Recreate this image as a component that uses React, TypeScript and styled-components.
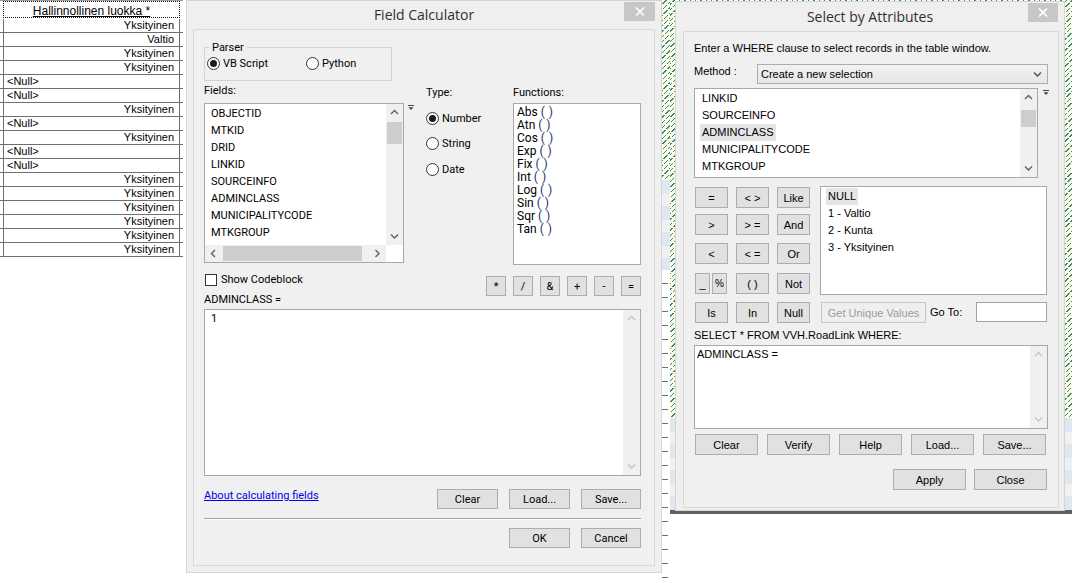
import React from "react";
import styled, { createGlobalStyle, css } from "styled-components";

const FC_FONT = `Roboto, "Liberation Sans", Arial, sans-serif`;
const SA_FONT = `"Liberation Sans", Arial, sans-serif`;
const TITLE_FONT = `"Open Sans", "Noto Sans", "Liberation Sans", sans-serif`;

const GlobalStyle = createGlobalStyle`
  *, *::before, *::after { box-sizing: border-box; }
  html, body { margin: 0; padding: 0; background: #ffffff; }
  body { width: 1081px; height: 583px; overflow: hidden; font-family: ${SA_FONT}; font-size: 11px; color: #000; }
`;

const Desktop = styled.div`
  position: relative;
  width: 1081px;
  height: 583px;
  overflow: hidden;
  background: #fff;
`;

const Backdrop = styled.div`
  display: grid;
  grid-template-columns: 186px 476px 8px 402px 1fr;
  height: 583px;
`;

const Blank = styled.div`
  background: #fff;
`;

/* ---------- attribute table behind ---------- */
const TablePane = styled.div`
  display: flex;
  flex-direction: column;
  background: #fff;
`;
const TableTopRule = styled.div`
  width: 183px;
  height: 1px;
  background: #9a9a9a;
`;
const HeaderRow = styled.div`
  width: 183px;
  height: 18px;
  padding-left: 3px;
`;
const HeaderCell = styled.div`
  width: 177px;
  height: 17px;
  border: 1px dotted #111;
  padding-top: 3px;
  font-family: ${SA_FONT};
  font-size: 12px;
  line-height: 13px;
  text-align: center;
  text-decoration: underline;
  white-space: nowrap;
`;
const DataRow = styled.div`
  width: 183px;
  height: 14px;
  padding-left: 3px;
  border-bottom: 1px solid #6f6f6f;
`;
const DataCell = styled.div<{ $null?: boolean }>`
  width: 177px;
  height: 13px;
  border-left: 1px solid #6f6f6f;
  border-right: 1px solid #6f6f6f;
  padding: 0 5px 0 3px;
  font-size: 11px;
  line-height: 13px;
  text-align: ${(p) => (p.$null ? "left" : "right")};
  white-space: nowrap;
`;

/* ---------- map window behind ---------- */
const hatch = css`
  background-color: #fffde0;
  background-image: repeating-linear-gradient(0deg, #fffde0 0 1px, transparent 1px 5px),
    repeating-linear-gradient(135deg, transparent 0 2.8px, #2f8894 2.8px 3.8px);
`;
const Sliver = styled.div`
  display: flex;
  flex-direction: column;
`;
const HatchBlock = styled.div<{ $h: number }>`
  height: ${(p) => p.$h}px;
  flex: none;
  ${hatch}
`;
const BandBlock = styled.div<{ $h: number }>`
  height: ${(p) => p.$h}px;
  flex: none;
  background: repeating-linear-gradient(180deg, #dfe8f1 0 14px, #f1f1f1 14px 26px);
`;
const TickBlock = styled.div`
  flex: 1;
  background-image: repeating-linear-gradient(180deg, transparent 0 13px, #6f6f6f 13px 14px);
  background-size: 6px 100%;
  background-repeat: no-repeat;
`;
const MapWindow = styled.div`
  display: flex;
  flex-direction: column;
`;
const MapEdge = styled.div`
  height: 4px;
  flex: none;
  background: #606060;
`;

/* ---------- dialog windows ---------- */
const Window = styled.div<{ $x: number; $y: number; $w: number; $h: number }>`
  position: absolute;
  left: ${(p) => p.$x}px;
  top: ${(p) => p.$y}px;
  width: ${(p) => p.$w}px;
  height: ${(p) => p.$h}px;
  display: flex;
  flex-direction: column;
  background: #efefef;
  border: 1px solid #d4d4d4;
`;
const TitleBar = styled.div<{ $h: number }>`
  height: ${(p) => p.$h}px;
  flex: none;
  display: grid;
  grid-template-columns: 1fr auto 1fr;
  align-items: start;
`;
const TitleText = styled.div`
  grid-column: 2;
  align-self: center;
  font-family: ${TITLE_FONT};
  font-size: 14px;
  line-height: 20px;
  color: #2f2f2f;
  white-space: nowrap;
`;
const CloseBox = styled.div<{ $w: number; $mt: number; $mr: number }>`
  grid-column: 3;
  justify-self: end;
  width: ${(p) => p.$w}px;
  height: 19px;
  margin-top: ${(p) => p.$mt}px;
  margin-right: ${(p) => p.$mr}px;
  background: #c7c7c7;
  display: flex;
  align-items: center;
  justify-content: center;
`;
const Panel = styled.div<{ $m: string; $p: string; $font: string }>`
  flex: 1;
  margin: ${(p) => p.$m};
  padding: ${(p) => p.$p};
  border: 1px solid #d9d9d9;
  background: #f0f0f0;
  font-family: ${(p) => p.$font};
  font-size: 11px;
  display: flex;
  flex-direction: column;
  min-height: 0;
`;

const Button = styled.div<{ $w: number; $h?: number; $disabled?: boolean; $fs?: number }>`
  width: ${(p) => p.$w}px;
  height: ${(p) => p.$h ?? 20}px;
  flex: none;
  display: flex;
  align-items: center;
  justify-content: center;
  background: ${(p) => (p.$disabled ? "#efefef" : "#e1e1e1")};
  border: 1px solid ${(p) => (p.$disabled ? "#c6c6c6" : "#adadad")};
  color: ${(p) => (p.$disabled ? "#9c9c9c" : "#000")};
  font-size: ${(p) => p.$fs ?? 11}px;
  white-space: nowrap;
`;

const Label = styled.div<{ $pt?: number }>`
  line-height: 13px;
  padding-top: ${(p) => p.$pt ?? 0}px;
  white-space: nowrap;
`;

/* radios / checks */
const RadioOption = styled.div<{ $w?: number }>`
  display: flex;
  align-items: center;
  gap: 3px;
  height: 14px;
  width: ${(p) => (p.$w ? `${p.$w}px` : "auto")};
  white-space: nowrap;
`;
const RadioCircle = styled.span`
  width: 13px;
  height: 13px;
  flex: none;
  border: 1px solid #333;
  border-radius: 50%;
  background: #fff;
  display: flex;
  align-items: center;
  justify-content: center;
`;
const RadioDot = styled.span`
  width: 7px;
  height: 7px;
  border-radius: 50%;
  background: #1c1c1c;
`;
const Radio = ({ on }: { on?: boolean }) => <RadioCircle>{on && <RadioDot />}</RadioCircle>;

const CheckBox = styled.span`
  width: 12px;
  height: 12px;
  flex: none;
  border: 1px solid #333;
  background: #fff;
`;

/* lists & scrollbars */
const ListBox = styled.div<{ $w: number; $h: number; $col?: boolean }>`
  width: ${(p) => p.$w}px;
  height: ${(p) => p.$h}px;
  flex: none;
  background: #fff;
  border: 1px solid #a8a8a8;
  display: flex;
  flex-direction: ${(p) => (p.$col ? "column" : "row")};
  overflow: hidden;
`;
const ListMain = styled.div`
  flex: 1;
  display: flex;
  min-height: 0;
`;
const ListItems = styled.div<{ $pt: number; $pl: number; $lh: number; $fs?: number }>`
  flex: 1;
  padding-top: ${(p) => p.$pt}px;
  padding-left: ${(p) => p.$pl}px;
  line-height: ${(p) => p.$lh}px;
  font-size: ${(p) => p.$fs ?? 11}px;
  display: flex;
  flex-direction: column;
  align-items: flex-start;
  overflow: hidden;
`;
const ListItem = styled.div<{ $sel?: boolean }>`
  padding: 0 2px;
  margin-left: -2px;
  background: ${(p) => (p.$sel ? "#e5e5e5" : "transparent")};
  white-space: nowrap;
`;
const Paren = styled.span`
  color: #1b2f66;
  letter-spacing: 0.5px;
`;
const VScroll = styled.div`
  width: 17px;
  flex: none;
  background: #f0f0f0;
  display: flex;
  flex-direction: column;
  align-items: center;
`;
const HScroll = styled.div`
  height: 17px;
  flex: none;
  background: #f0f0f0;
  display: flex;
  align-items: center;
`;
const ArrowCell = styled.div`
  width: 17px;
  height: 17px;
  flex: none;
  display: flex;
  align-items: center;
  justify-content: center;
`;
const VThumb = styled.div<{ $top: number; $h: number }>`
  width: 15px;
  height: ${(p) => p.$h}px;
  margin-top: ${(p) => p.$top}px;
  flex: none;
  background: #cdcdcd;
`;
const HThumb = styled.div<{ $w: number }>`
  height: 15px;
  width: ${(p) => p.$w}px;
  margin-left: 1px;
  flex: none;
  background: #cdcdcd;
`;
const Fill = styled.div`
  flex: 1;
`;
const Corner = styled.div`
  width: 17px;
  height: 17px;
  flex: none;
  background: #fff;
`;
const TextArea = styled.div<{ $w: number; $h: number }>`
  width: ${(p) => p.$w}px;
  height: ${(p) => p.$h}px;
  flex: none;
  margin-top: 3px;
  background: #fff;
  border: 1px solid #a8a8a8;
  display: flex;
`;
const TextContent = styled.div<{ $pt: number; $pl: number }>`
  flex: 1;
  padding-top: ${(p) => p.$pt}px;
  padding-left: ${(p) => p.$pl}px;
  line-height: 13px;
  white-space: nowrap;
`;

const MarkerWrap = styled.div<{ $mt: number; $ml: number }>`
  margin-top: ${(p) => p.$mt}px;
  margin-left: ${(p) => p.$ml}px;
  width: 6px;
  height: 6px;
  display: flex;
`;

type Dir = "up" | "down" | "left" | "right";
const Chevron = ({ dir, color = "#606060" }: { dir: Dir; color?: string }) => {
  const paths: Record<Dir, string> = {
    up: "M1 5 L4.5 1.5 L8 5",
    down: "M1 1.5 L4.5 5 L8 1.5",
    left: "M5 1 L1.5 4.5 L5 8",
    right: "M1.5 1 L5 4.5 L1.5 8",
  };
  const horiz = dir === "up" || dir === "down";
  return (
    <svg width={horiz ? 9 : 7} height={horiz ? 7 : 9} viewBox={horiz ? "0 0 9 7" : "0 0 7 9"}>
      <path d={paths[dir]} fill="none" stroke={color} strokeWidth="1.4" />
    </svg>
  );
};

const CloseGlyph = () => (
  <svg width="10" height="9" viewBox="0 0 10 9">
    <path d="M1 0.5 L9 8.5 M9 0.5 L1 8.5" stroke="#fff" strokeWidth="1.7" fill="none" />
  </svg>
);

const DropMarker = () => (
  <svg width="6" height="6" viewBox="0 0 6 6">
    <path d="M0 0.5 H6" stroke="#444" strokeWidth="1" />
    <path d="M0.5 2.2 H5.5 L3 5 Z" fill="#444" />
  </svg>
);

/* ---------- Field Calculator parts ---------- */
const GroupBox = styled.div`
  margin-top: 17px;
  width: 188px;
  height: 34px;
  flex: none;
  border: 1px solid #d3d3d3;
`;
const GroupLegend = styled.div`
  margin: -7px 0 0 4px;
  padding: 0 3px;
  width: fit-content;
  background: #f0f0f0;
  line-height: 13px;
`;
const RadioRow = styled.div`
  display: flex;
  margin-top: 2px;
  padding-left: 2px;
`;
const FCGrid = styled.div`
  margin-top: 3px;
  display: grid;
  grid-template-columns: 200px 22px 87px 128px;
  grid-template-rows: 13px auto;
  row-gap: 6px;
  align-items: start;
`;
const TypeColumn = styled.div`
  padding-top: 8px;
  display: flex;
  flex-direction: column;
  gap: 11.5px;
`;
const CodeRow = styled.div`
  margin-top: 8px;
  height: 33px;
  flex: none;
  display: flex;
  justify-content: space-between;
  align-items: flex-start;
`;
const CodeLeft = styled.div`
  display: flex;
  flex-direction: column;
`;
const CheckLine = styled.div`
  display: flex;
  align-items: center;
  gap: 4px;
  height: 13px;
  line-height: 13px;
  padding-left: 1px;
`;
const ExprLabel = styled.div`
  margin-top: 7px;
  line-height: 13px;
`;
const OpButtons = styled.div`
  display: flex;
  gap: 7px;
  margin-top: 3px;
`;
const ActionRow = styled.div`
  margin-top: 13px;
  height: 20px;
  flex: none;
  display: flex;
  align-items: flex-start;
`;
const HelpLink = styled.a`
  color: #0000ee;
  text-decoration: underline;
  line-height: 13px;
  cursor: pointer;
`;
const ButtonGroup = styled.div<{ $gap: number; $ml?: string }>`
  display: flex;
  gap: ${(p) => p.$gap}px;
  margin-left: ${(p) => p.$ml ?? "0"};
`;
const Separator = styled.div`
  margin-top: 9px;
  height: 2px;
  flex: none;
  border-top: 1px solid #a3a3a3;
  border-bottom: 1px solid #ffffff;
`;
const DialogButtons = styled.div<{ $mt: number; $mr?: number; $gap: number }>`
  margin-top: ${(p) => p.$mt}px;
  margin-right: ${(p) => p.$mr ?? 0}px;
  display: flex;
  justify-content: flex-end;
  gap: ${(p) => p.$gap}px;
`;

const FC_FIELDS = ["OBJECTID", "MTKID", "DRID", "LINKID", "SOURCEINFO", "ADMINCLASS", "MUNICIPALITYCODE", "MTKGROUP"];
const FC_FUNCS = ["Abs", "Atn", "Cos", "Exp", "Fix", "Int", "Log", "Sin", "Sqr", "Tan"];
const FC_OPS = ["*", "/", "&", "+", "-", "="];

function FieldCalculator() {
  return (
    <Window $x={186} $y={0} $w={476} $h={573}>
      <TitleBar $h={28}>
        <TitleText>Field Calculator</TitleText>
        <CloseBox $w={31} $mt={1} $mr={6}>
          <CloseGlyph />
        </CloseBox>
      </TitleBar>
      <Panel $m="0 6px 6px 6px" $p="0 13px 0 10px" $font={FC_FONT}>
        <GroupBox>
          <GroupLegend>Parser</GroupLegend>
          <RadioRow>
            <RadioOption $w={99}>
              <Radio on />
              VB Script
            </RadioOption>
            <RadioOption>
              <Radio />
              Python
            </RadioOption>
          </RadioRow>
        </GroupBox>

        <FCGrid>
          <Label>Fields:</Label>
          <span />
          <Label $pt={2}>Type:</Label>
          <Label $pt={2}>Functions:</Label>

          <ListBox $w={200} $h={160} $col>
            <ListMain>
              <ListItems $pt={1} $pl={6} $lh={17}>
                {FC_FIELDS.map((f) => (
                  <ListItem key={f}>{f}</ListItem>
                ))}
              </ListItems>
              <VScroll>
                <ArrowCell>
                  <Chevron dir="up" />
                </ArrowCell>
                <VThumb $top={1} $h={22} />
                <Fill />
                <ArrowCell>
                  <Chevron dir="down" />
                </ArrowCell>
              </VScroll>
            </ListMain>
            <HScroll>
              <ArrowCell>
                <Chevron dir="left" />
              </ArrowCell>
              <HThumb $w={139} />
              <Fill />
              <ArrowCell>
                <Chevron dir="right" />
              </ArrowCell>
              <Corner />
            </HScroll>
          </ListBox>
          <MarkerWrap $mt={2} $ml={4}>
            <DropMarker />
          </MarkerWrap>
          <TypeColumn>
            <RadioOption>
              <Radio on />
              Number
            </RadioOption>
            <RadioOption>
              <Radio />
              String
            </RadioOption>
            <RadioOption>
              <Radio />
              Date
            </RadioOption>
          </TypeColumn>
          <ListBox $w={128} $h={162}>
            <ListItems $pt={2} $pl={3} $lh={13} $fs={12}>
              {FC_FUNCS.map((f) => (
                <ListItem key={f}>
                  {f} <Paren>( )</Paren>
                </ListItem>
              ))}
            </ListItems>
          </ListBox>
        </FCGrid>

        <CodeRow>
          <CodeLeft>
            <CheckLine>
              <CheckBox />
              Show Codeblock
            </CheckLine>
            <ExprLabel>ADMINCLASS =</ExprLabel>
          </CodeLeft>
          <OpButtons>
            {FC_OPS.map((o) => (
              <Button key={o} $w={20} $h={20}>
                {o}
              </Button>
            ))}
          </OpButtons>
        </CodeRow>

        <TextArea $w={437} $h={167}>
          <TextContent $pt={2} $pl={6}>
            1
          </TextContent>
          <VScroll>
            <ArrowCell>
              <Chevron dir="up" color="#c4c4c4" />
            </ArrowCell>
            <Fill />
            <ArrowCell>
              <Chevron dir="down" color="#c4c4c4" />
            </ArrowCell>
          </VScroll>
        </TextArea>

        <ActionRow>
          <HelpLink>About calculating fields</HelpLink>
          <ButtonGroup $gap={11} $ml="auto">
            <Button $w={61}>Clear</Button>
            <Button $w={61}>Load...</Button>
            <Button $w={60}>Save...</Button>
          </ButtonGroup>
        </ActionRow>
        <Separator />
        <DialogButtons $mt={8} $gap={11}>
          <Button $w={61}>OK</Button>
          <Button $w={60}>Cancel</Button>
        </DialogButtons>
      </Panel>
    </Window>
  );
}

/* ---------- Select by Attributes parts ---------- */
const IntroLine = styled.div`
  line-height: 13px;
  white-space: nowrap;
`;
const MethodRow = styled.div`
  margin-top: 9px;
  height: 20px;
  flex: none;
  display: flex;
  align-items: flex-start;
`;
const MethodLabel = styled.div`
  width: 63px;
  margin-top: 1px;
  line-height: 13px;
  flex: none;
`;
const Combo = styled.div`
  width: 291px;
  height: 20px;
  border: 1px solid #acacac;
  background: linear-gradient(#f2f2f2, #e6e6e6);
  display: flex;
  align-items: center;
  justify-content: space-between;
  padding: 0 5px 0 3px;
`;
const FieldsRow = styled.div`
  margin-top: 4px;
  display: flex;
  align-items: flex-start;
`;
const OpGrid = styled.div`
  margin: 9px 0 0 1px;
  display: grid;
  grid-template-columns: 33px 33px 33px 1fr;
  grid-template-rows: 27px 29px 30px 29px 21px;
  column-gap: 8px;
  align-items: start;
`;
const GridSlot = styled.div<{ $row: number; $col: number }>`
  grid-row: ${(p) => p.$row};
  grid-column: ${(p) => p.$col};
  display: flex;
  gap: 2px;
`;
const ValuesCell = styled.div`
  grid-column: 4;
  grid-row: 1 / span 4;
  margin: -1px 0 0 2px;
`;
const UniqueRow = styled.div`
  grid-column: 4;
  grid-row: 5;
  display: flex;
  align-items: center;
  margin-left: 3px;
  height: 21px;
`;
const GoToLabel = styled.div`
  margin-left: 4px;
  line-height: 13px;
  white-space: nowrap;
`;
const GoToInput = styled.div`
  margin-left: auto;
  margin-right: 1px;
  margin-top: -1px;
  width: 71px;
  height: 20px;
  background: #fff;
  border: 1px solid #a3a3a3;
`;
const SelectLabel = styled.div`
  margin-top: 6px;
  line-height: 13px;
  white-space: nowrap;
`;
const SaButtonRow = styled.div`
  margin: 5px 0 0 1px;
  display: flex;
  gap: 9px;
`;

const SA_FIELDS = ["LINKID", "SOURCEINFO", "ADMINCLASS", "MUNICIPALITYCODE", "MTKGROUP"];
const SA_VALUES = ["NULL", "1 - Valtio", "2 - Kunta", "3 - Yksityinen"];
const SA_OPS: string[][] = [
  ["=", "< >", "Like"],
  [">", "> =", "And"],
  ["<", "< =", "Or"],
];

function SelectByAttributes() {
  return (
    <Window $x={675} $y={1} $w={390} $h={510}>
      <TitleBar $h={29}>
        <TitleText>Select by Attributes</TitleText>
        <CloseBox $w={30} $mt={1} $mr={6}>
          <CloseGlyph />
        </CloseBox>
      </TitleBar>
      <Panel $m="0 5px 2px 7px" $p="10px 10px 0 10px" $font={SA_FONT}>
        <IntroLine>Enter a WHERE clause to select records in the table window.</IntroLine>
        <MethodRow>
          <MethodLabel>Method :</MethodLabel>
          <Combo>
            <span>Create a new selection</span>
            <Chevron dir="down" color="#505050" />
          </Combo>
        </MethodRow>
        <FieldsRow>
          <ListBox $w={344} $h={90}>
            <ListItems $pt={1} $pl={7} $lh={17}>
              {SA_FIELDS.map((f) => (
                <ListItem key={f} $sel={f === "ADMINCLASS"}>
                  {f}
                </ListItem>
              ))}
            </ListItems>
            <VScroll>
              <ArrowCell>
                <Chevron dir="up" />
              </ArrowCell>
              <VThumb $top={4} $h={17} />
              <Fill />
              <ArrowCell>
                <Chevron dir="down" />
              </ArrowCell>
            </VScroll>
          </ListBox>
          <MarkerWrap $mt={2} $ml={5}>
            <DropMarker />
          </MarkerWrap>
        </FieldsRow>

        <OpGrid>
          {SA_OPS.map((row, r) =>
            row.map((op, c) => (
              <GridSlot key={`${r}-${c}`} $row={r + 1} $col={c + 1}>
                <Button $w={33} $h={21}>
                  {op}
                </Button>
              </GridSlot>
            ))
          )}
          <GridSlot $row={4} $col={1}>
            <Button $w={15} $h={21}>
              _
            </Button>
            <Button $w={15} $h={21} $fs={10}>
              %
            </Button>
          </GridSlot>
          <GridSlot $row={4} $col={2}>
            <Button $w={33} $h={21}>
              ( )
            </Button>
          </GridSlot>
          <GridSlot $row={4} $col={3}>
            <Button $w={33} $h={21}>
              Not
            </Button>
          </GridSlot>
          <ValuesCell>
            <ListBox $w={227} $h={109}>
              <ListItems $pt={1} $pl={7} $lh={17}>
                {SA_VALUES.map((v) => (
                  <ListItem key={v} $sel={v === "NULL"}>
                    {v}
                  </ListItem>
                ))}
              </ListItems>
            </ListBox>
          </ValuesCell>
          <GridSlot $row={5} $col={1}>
            <Button $w={33} $h={21}>
              Is
            </Button>
          </GridSlot>
          <GridSlot $row={5} $col={2}>
            <Button $w={33} $h={21}>
              In
            </Button>
          </GridSlot>
          <GridSlot $row={5} $col={3}>
            <Button $w={33} $h={21}>
              Null
            </Button>
          </GridSlot>
          <UniqueRow>
            <Button $w={105} $h={21} $disabled>
              Get Unique Values
            </Button>
            <GoToLabel>Go To:</GoToLabel>
            <GoToInput />
          </UniqueRow>
        </OpGrid>

        <SelectLabel>SELECT * FROM VVH.RoadLink WHERE:</SelectLabel>
        <TextArea $w={354} $h={84}>
          <TextContent $pt={2} $pl={2}>
            ADMINCLASS =
          </TextContent>
          <VScroll>
            <ArrowCell>
              <Chevron dir="up" color="#c4c4c4" />
            </ArrowCell>
            <Fill />
            <ArrowCell>
              <Chevron dir="down" color="#c4c4c4" />
            </ArrowCell>
          </VScroll>
        </TextArea>
        <SaButtonRow>
          <Button $w={63} $h={21}>Clear</Button>
          <Button $w={63} $h={21}>Verify</Button>
          <Button $w={63} $h={21}>Help</Button>
          <Button $w={63} $h={21}>Load...</Button>
          <Button $w={63} $h={21}>Save...</Button>
        </SaButtonRow>
        <DialogButtons $mt={14} $mr={1} $gap={8}>
          <Button $w={73} $h={21}>Apply</Button>
          <Button $w={73} $h={21}>Close</Button>
        </DialogButtons>
      </Panel>
    </Window>
  );
}

const TABLE_ROWS: (string | null)[] = [
  "Yksityinen",
  "Valtio",
  "Yksityinen",
  "Yksityinen",
  null,
  null,
  "Yksityinen",
  null,
  "Yksityinen",
  null,
  null,
  "Yksityinen",
  "Yksityinen",
  "Yksityinen",
  "Yksityinen",
  "Yksityinen",
  "Yksityinen",
];

export default function App() {
  return (
    <>
      <GlobalStyle />
      <Desktop>
        <Backdrop>
          <TablePane>
            <TableTopRule />
            <HeaderRow>
              <HeaderCell>Hallinnollinen luokka *</HeaderCell>
            </HeaderRow>
            {TABLE_ROWS.map((v, i) => (
              <DataRow key={i}>
                <DataCell $null={v === null}>{v ?? "<Null>"}</DataCell>
              </DataRow>
            ))}
          </TablePane>
          <Blank />
          <Sliver>
            <HatchBlock $h={180} />
            <BandBlock $h={90} />
            <TickBlock />
          </Sliver>
          <MapWindow>
            <HatchBlock $h={418} />
            <BandBlock $h={92} />
            <MapEdge />
          </MapWindow>
          <Blank />
        </Backdrop>
        <FieldCalculator />
        <SelectByAttributes />
      </Desktop>
    </>
  );
}
